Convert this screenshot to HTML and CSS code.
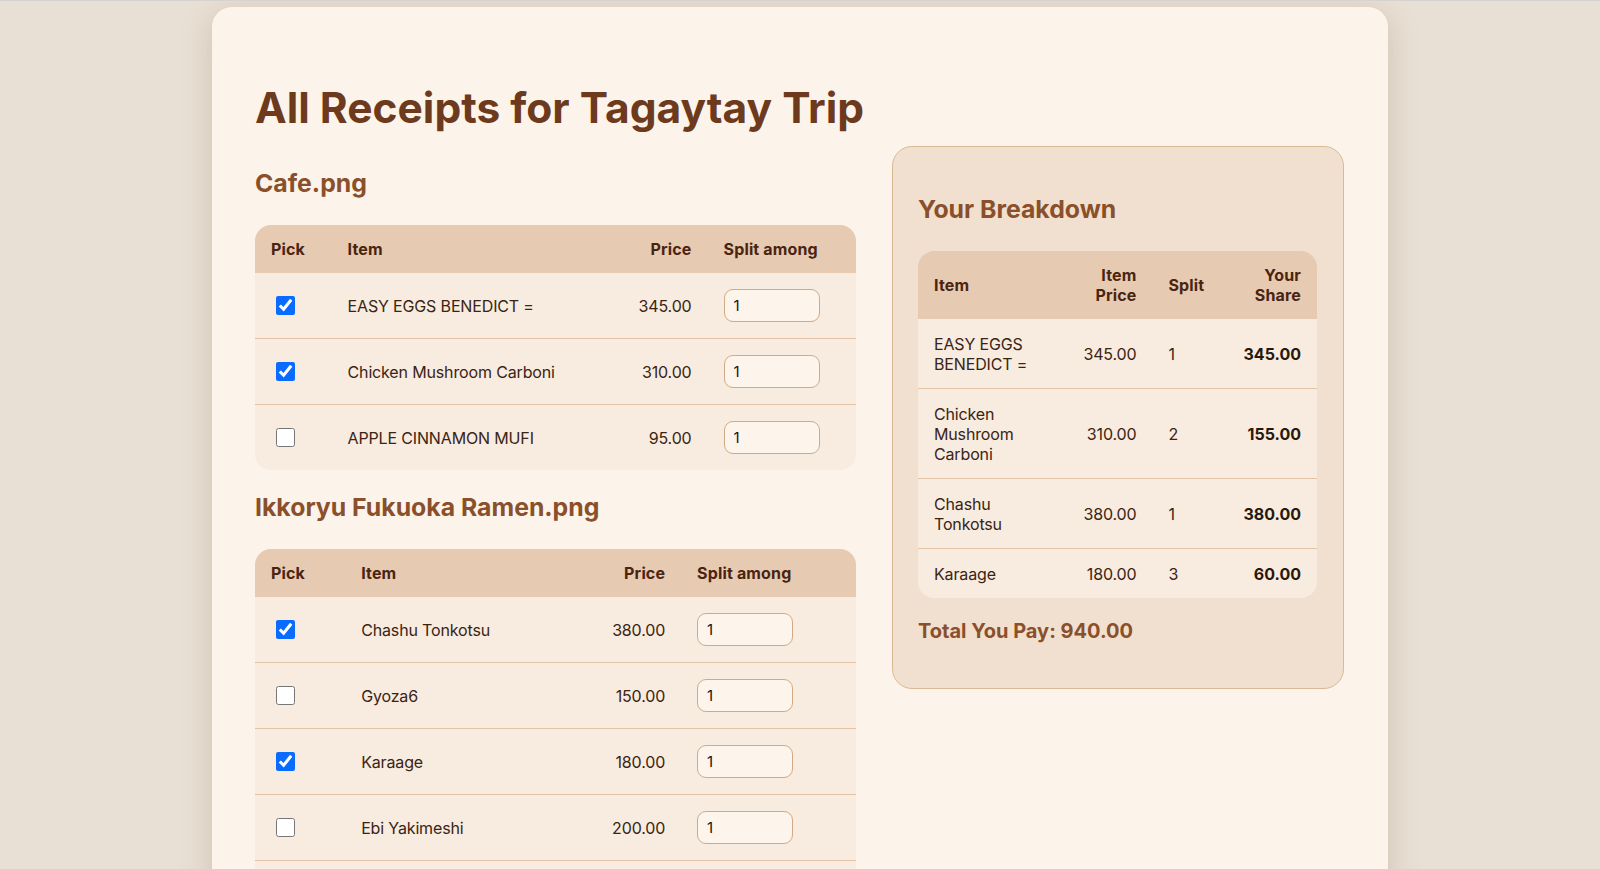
FILE: index.html
```html
<!DOCTYPE html>
<html lang="en">
<head>
<meta charset="utf-8">
<title>All Receipts for Tagaytay Trip</title>
<link rel="stylesheet" href="styles.css">
</head>
<body>
<main class="card">
  <h1 class="page-title">All Receipts for Tagaytay Trip</h1>
  <div class="layout">
    <section class="receipts">
      <h2 class="section-title">Cafe.png</h2>
      <div class="table-wrap">
        <table class="items">
          <thead>
            <tr><th>Pick</th><th>Item</th><th class="num">Price</th><th>Split among</th></tr>
          </thead>
          <tbody>
            <tr><td><input type="checkbox" checked></td><td>EASY EGGS BENEDICT =</td><td class="num">345.00</td><td class="split"><input class="qty" type="number" value="1"></td></tr>
            <tr><td><input type="checkbox" checked></td><td>Chicken Mushroom Carboni</td><td class="num">310.00</td><td class="split"><input class="qty" type="number" value="1"></td></tr>
            <tr><td><input type="checkbox"></td><td>APPLE CINNAMON MUFI</td><td class="num">95.00</td><td class="split"><input class="qty" type="number" value="1"></td></tr>
          </tbody>
        </table>
      </div>

      <h2 class="section-title">Ikkoryu Fukuoka Ramen.png</h2>
      <div class="table-wrap table-wrap--long">
        <table class="items continues">
          <thead>
            <tr><th>Pick</th><th>Item</th><th class="num">Price</th><th>Split among</th></tr>
          </thead>
          <tbody>
            <tr><td><input type="checkbox" checked></td><td>Chashu Tonkotsu</td><td class="num">380.00</td><td class="split"><input class="qty" type="number" value="1"></td></tr>
            <tr><td><input type="checkbox"></td><td>Gyoza6</td><td class="num">150.00</td><td class="split"><input class="qty" type="number" value="1"></td></tr>
            <tr><td><input type="checkbox" checked></td><td>Karaage</td><td class="num">180.00</td><td class="split"><input class="qty" type="number" value="1"></td></tr>
            <tr><td><input type="checkbox"></td><td>Ebi Yakimeshi</td><td class="num">200.00</td><td class="split"><input class="qty" type="number" value="1"></td></tr>
          </tbody>
        </table>
      </div>
    </section>

    <aside class="breakdown">
      <h2 class="section-title">Your Breakdown</h2>
      <div class="table-wrap">
        <table class="summary">
          <thead>
            <tr><th>Item</th><th class="num">Item Price</th><th>Split</th><th class="num">Your Share</th></tr>
          </thead>
          <tbody>
            <tr><td>EASY EGGS BENEDICT =</td><td class="num">345.00</td><td>1</td><td class="num share">345.00</td></tr>
            <tr><td>Chicken Mushroom Carboni</td><td class="num">310.00</td><td>2</td><td class="num share">155.00</td></tr>
            <tr><td>Chashu Tonkotsu</td><td class="num">380.00</td><td>1</td><td class="num share">380.00</td></tr>
            <tr><td>Karaage</td><td class="num">180.00</td><td>3</td><td class="num share">60.00</td></tr>
          </tbody>
        </table>
      </div>
      <p class="total">Total You Pay: 940.00</p>
    </aside>
  </div>
</main>
</body>
</html>
```
FILE: styles.css
```css
* { box-sizing: border-box; }

html, body { height: 100%; }

body {
  margin: 0;
  padding-top: 6px;
  border-top: 1px solid #d6d3cf;
  background: #e9e0d5;
  font-family: Inter, "Noto Sans", sans-serif;
  color: #3a2414;
  overflow: hidden;
}

.card {
  width: 1176px;
  margin: 0 auto;
  padding: 76px 44px 60px 43px;
  background: #fcf4ea;
  border-radius: 20px;
  box-shadow: 0 6px 32px rgba(120, 84, 48, 0.22);
  min-height: 1000px;
}

.page-title {
  margin: 0;
  font-size: 42.5px;
  line-height: 50px;
  font-weight: 700;
  letter-spacing: 0;
  color: #6d3a1e;
}

.layout {
  display: grid;
  grid-template-columns: 601px 452px;
  column-gap: 36px;
  align-items: start;
  margin-top: 13px;
}

.section-title {
  margin: 22px 0 27px;
  font-size: 24.8px;
  line-height: 30px;
  font-weight: 700;
  color: #8a4f2b;
}

.table-wrap {
  border-radius: 16px;
  overflow: hidden;
  background: #f8ebdf;
}

.table-wrap--long { padding-bottom: 48px; }

table {
  width: 100%;
  border-collapse: collapse;
  font-size: 16px;
  line-height: 20px;
}

th {
  background: #e6cab1;
  color: #4a2410;
  font-weight: 700;
  text-align: left;
  padding: 14px 16px;
  letter-spacing: 0.15px;
}

td {
  padding: 14px 16px;
  border-bottom: 1px solid #e2c3a5;
  vertical-align: middle;
  letter-spacing: -0.15px;
}

tbody tr:last-child td { border-bottom: none; }

.items.continues tbody tr:last-child td { border-bottom: 1px solid #e2c3a5; }

.num { text-align: right; }

.items td { padding-top: 16px; padding-bottom: 16px; }

.items input[type="checkbox"] {
  width: 19px;
  height: 19px;
  margin: 0 0 0 5px;
  display: block;
  accent-color: #0a6cff;
}

.qty {
  display: block;
  width: 96px;
  height: 33px;
  padding: 0 9px;
  border: 1px solid #d3a983;
  border-radius: 9px;
  background: #fdf5ec;
  font-family: Inter, "Noto Sans", sans-serif;
  font-size: 15px;
  color: #1f140c;
  -moz-appearance: textfield;
}

.qty::-webkit-outer-spin-button,
.qty::-webkit-inner-spin-button { -webkit-appearance: none; margin: 0; }

.breakdown {
  background: #f1e0cf;
  border: 1px solid #dcb995;
  border-radius: 20px;
  padding: 25px 26px 45px 25px;
}

.breakdown .section-title { margin-top: 22px; }

.summary td { padding-top: 15px; padding-bottom: 14px; }

.share { font-weight: 700; color: #2a170b; letter-spacing: 0; }

.total {
  margin: 21px 0 0;
  font-size: 20px;
  line-height: 24px;
  font-weight: 700;
  color: #8a4f2b;
}
```
